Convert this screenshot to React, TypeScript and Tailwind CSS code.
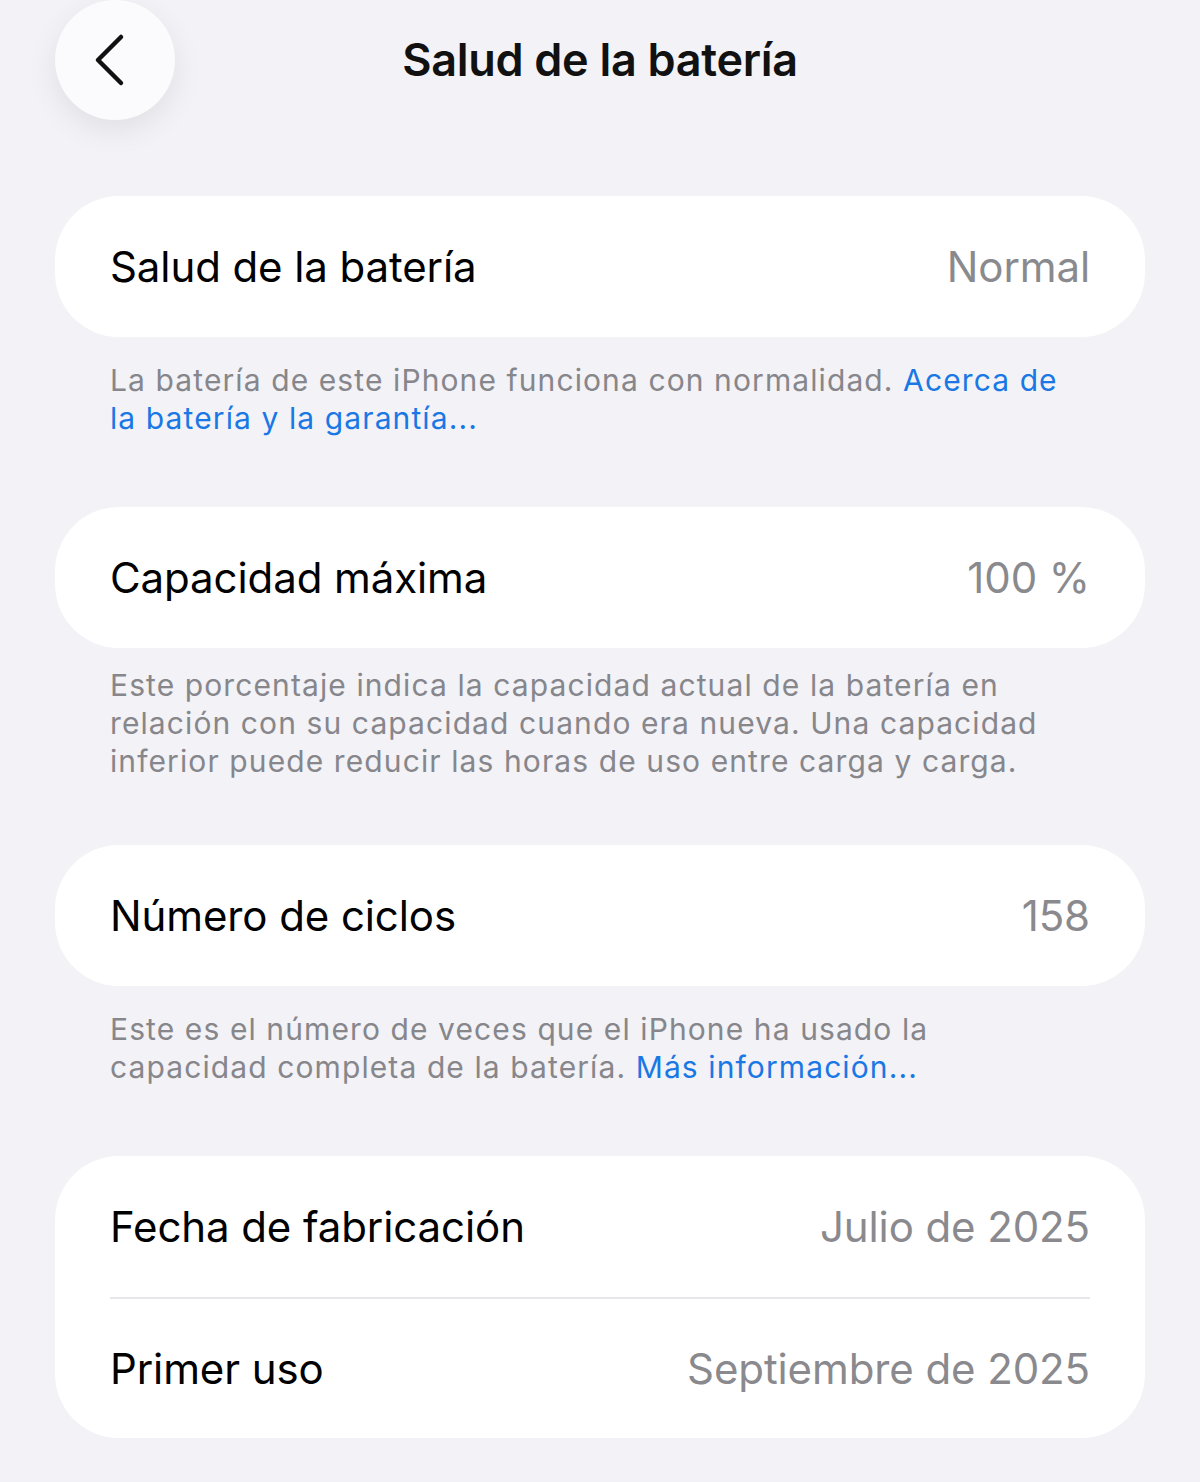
import { ReactNode } from 'react';

type Row = { label: string; value: string };

function Card({ rows }: { rows: Row[] }) {
  return (
    <div className="bg-white rounded-[64px] px-[55px]">
      {rows.map((row, i) => (
        <div
          key={row.label}
          className={`h-[141px] flex items-center justify-between ${i > 0 ? 'border-t-2 border-[#e6e6eb]' : ''}`}
        >
          <span className="text-[42px] text-black tracking-[-0.1px]">{row.label}</span>
          <span className="text-[42px] text-[#8a8a8e] tracking-[-0.1px]">{row.value}</span>
        </div>
      ))}
    </div>
  );
}

function Note({ children, className = '' }: { children: ReactNode; className?: string }) {
  return (
    <p className={`px-[55px] text-[30px] leading-[38px] text-[#86868b] tracking-[1.1px] ${className}`}>
      {children}
    </p>
  );
}

function Link({ children }: { children: ReactNode }) {
  return <span className="text-[#1a78e5]">{children}</span>;
}

export default function App() {
  return (
    <div
      className="min-h-screen bg-[#f2f2f7] px-[55px]"
      style={{ fontFamily: 'Inter, "Noto Sans", sans-serif' }}
    >
      {/* Top bar */}
      <div className="grid grid-cols-[120px_1fr_120px] items-center h-[120px]">
        <button className="w-[120px] h-[120px] rounded-full bg-[#fbfbfd] shadow-[0_10px_30px_rgba(0,0,0,0.08)] flex items-center justify-center">
          <svg width="40" height="56" viewBox="0 0 40 56" fill="none" className="-ml-[10px]">
            <path d="M31 5 L8 28 L31 51" stroke="#111" strokeWidth="4.5" strokeLinecap="round" strokeLinejoin="round" />
          </svg>
        </button>
        <h1 className="text-center text-[45px] font-semibold text-[#111] tracking-[-0.3px]">Salud de la batería</h1>
        <div />
      </div>

      <div className="pt-[76px]">
        <Card rows={[{ label: 'Salud de la batería', value: 'Normal' }]} />
        <Note className="pt-[24px] pb-[70px]">
          La batería de este iPhone funciona con normalidad. <Link>Acerca de la batería y la garantía...</Link>
        </Note>

        <Card rows={[{ label: 'Capacidad máxima', value: '100 %' }]} />
        <Note className="pt-[18px] pb-[65px]">
          Este porcentaje indica la capacidad actual de la batería en relación con su capacidad cuando era nueva. Una
          capacidad inferior puede reducir las horas de uso entre carga y carga.
        </Note>

        <Card rows={[{ label: 'Número de ciclos', value: '158' }]} />
        <Note className="pt-[24px] pb-[70px]">
          Este es el número de veces que el iPhone ha usado la capacidad completa de la batería.{' '}
          <Link>Más información...</Link>
        </Note>

        <Card
          rows={[
            { label: 'Fecha de fabricación', value: 'Julio de 2025' },
            { label: 'Primer uso', value: 'Septiembre de 2025' },
          ]}
        />
      </div>
    </div>
  );
}
